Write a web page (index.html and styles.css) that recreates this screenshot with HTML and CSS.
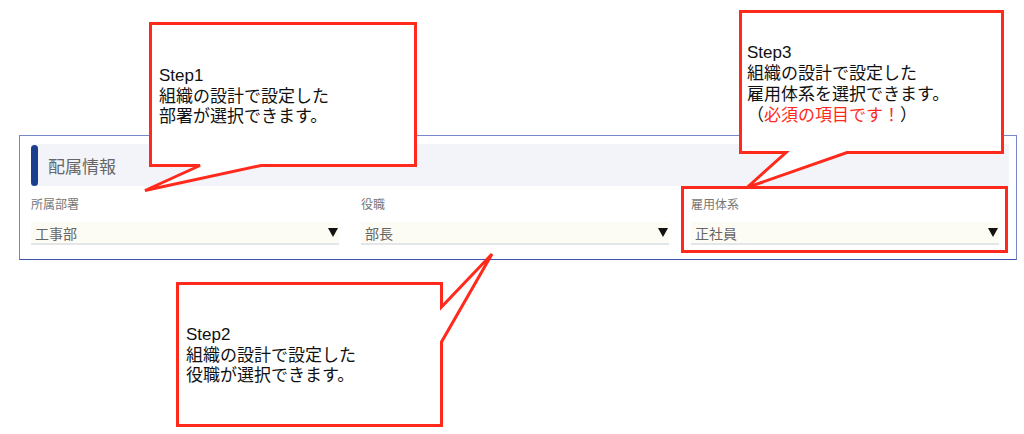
FILE: index.html
```html
<!DOCTYPE html>
<html lang="ja">
<head>
    <meta charset="UTF-8">
    <meta name="viewport" content="width=device-width, initial-scale=1.0">
    <title>配属情報</title>
    <link rel="stylesheet" href="styles.css">
</head>
<body>
    <section class="panel">
        <div class="panel-head">
            <span class="panel-bar"></span>
            <h2 class="panel-title">配属情報</h2>
        </div>
        <div class="fields">
            <div class="field">
                <label class="field-label">所属部署</label>
                <div class="select"><span>工事部</span><svg class="arrow" width="10" height="9" viewBox="0 0 10 9"><polygon points="0,0 10,0 5,9" /></svg></div>
            </div>
            <div class="field">
                <label class="field-label">役職</label>
                <div class="select"><span>部長</span><svg class="arrow" width="10" height="9" viewBox="0 0 10 9"><polygon points="0,0 10,0 5,9" /></svg></div>
            </div>
            <div class="field">
                <label class="field-label">雇用体系</label>
                <div class="select"><span>正社員</span><svg class="arrow" width="10" height="9" viewBox="0 0 10 9"><polygon points="0,0 10,0 5,9" /></svg></div>
            </div>
        </div>
    </section>

    <!-- 説明用の吹き出し -->
    <svg class="marks" width="1024" height="434" viewBox="0 0 1024 434">
        <rect x="682.5" y="187.5" width="324" height="64" />
        <polygon points="150.5,23.5 415.5,23.5 415.5,165.5 261,165.5 145,190.5 200,165.5 150.5,165.5" />
        <polygon points="740.5,11.5 1002.5,11.5 1002.5,152.5 847,152.5 747,187.5 786,152.5 740.5,152.5" />
        <polygon points="177.5,283.5 441.5,283.5 441.5,307 492,254 441.5,342 441.5,425.5 177.5,425.5" />
    </svg>

    <div class="note note-1">Step1<br>組織の設計で設定した<br>部署が選択できます。</div>
    <div class="note note-2">Step2<br>組織の設計で設定した<br>役職が選択できます。</div>
    <div class="note note-3">Step3<br>組織の設計で設定した<br>雇用体系を選択できます。<br>（<span class="must">必須の項目です！</span>）</div>
</body>
</html>
```

FILE: styles.css
```css
body {
    margin: 0;
    width: 1024px;
    height: 434px;
    position: relative;
    overflow: hidden;
    background: #fff;
    font-family: "Liberation Sans", "Noto Sans CJK JP", sans-serif;
}
.panel {
    box-sizing: border-box;
    width: 998px;
    margin: 135px 0 0 19px;
    padding: 8px 7px 14px 11px;
    border: 1px solid #7787c9;
    border-bottom-color: #3d51aa;
}
.panel-head {
    display: flex;
    align-items: center;
    height: 42px;
    background: #f3f4fa;
}
.panel-bar {
    width: 7px;
    height: 41px;
    border-radius: 4px;
    background: #1b3f8f;
}
.panel-title {
    margin: 0 0 0 10px;
    font-size: 17px;
    font-weight: normal;
    color: #666;
}
.fields {
    display: grid;
    grid-template-columns: repeat(3, 308px);
    column-gap: 22px;
}
.field-label {
    display: block;
    margin: 11px 0 9px;
    font-size: 12px;
    line-height: 16px;
    color: #777;
}
.select {
    display: flex;
    align-items: center;
    justify-content: space-between;
    height: 21px;
    padding: 0 1px 0 4px;
    background: #fcfcf4;
    border-bottom: 2px solid #e3e6e6;
    font-size: 14px;
    color: #666;
}
.arrow {
    fill: #111;
}
.marks {
    position: absolute;
    left: 0;
    top: 0;
}
.marks rect {
    fill: none;
    stroke: #ff2a1c;
    stroke-width: 3;
}
.marks polygon {
    fill: #fff;
    stroke: #ff2a1c;
    stroke-width: 3;
    stroke-linejoin: miter;
}
.note {
    position: absolute;
    font-size: 17px;
    line-height: 20.5px;
    color: #111;
    white-space: nowrap;
}
.note-1 {
    left: 159px;
    top: 66px;
}
.note-2 {
    left: 186px;
    top: 325px;
}
.note-3 {
    left: 747px;
    top: 42px;
    line-height: 21px;
}
.must {
    color: #ff2a1c;
}
```
